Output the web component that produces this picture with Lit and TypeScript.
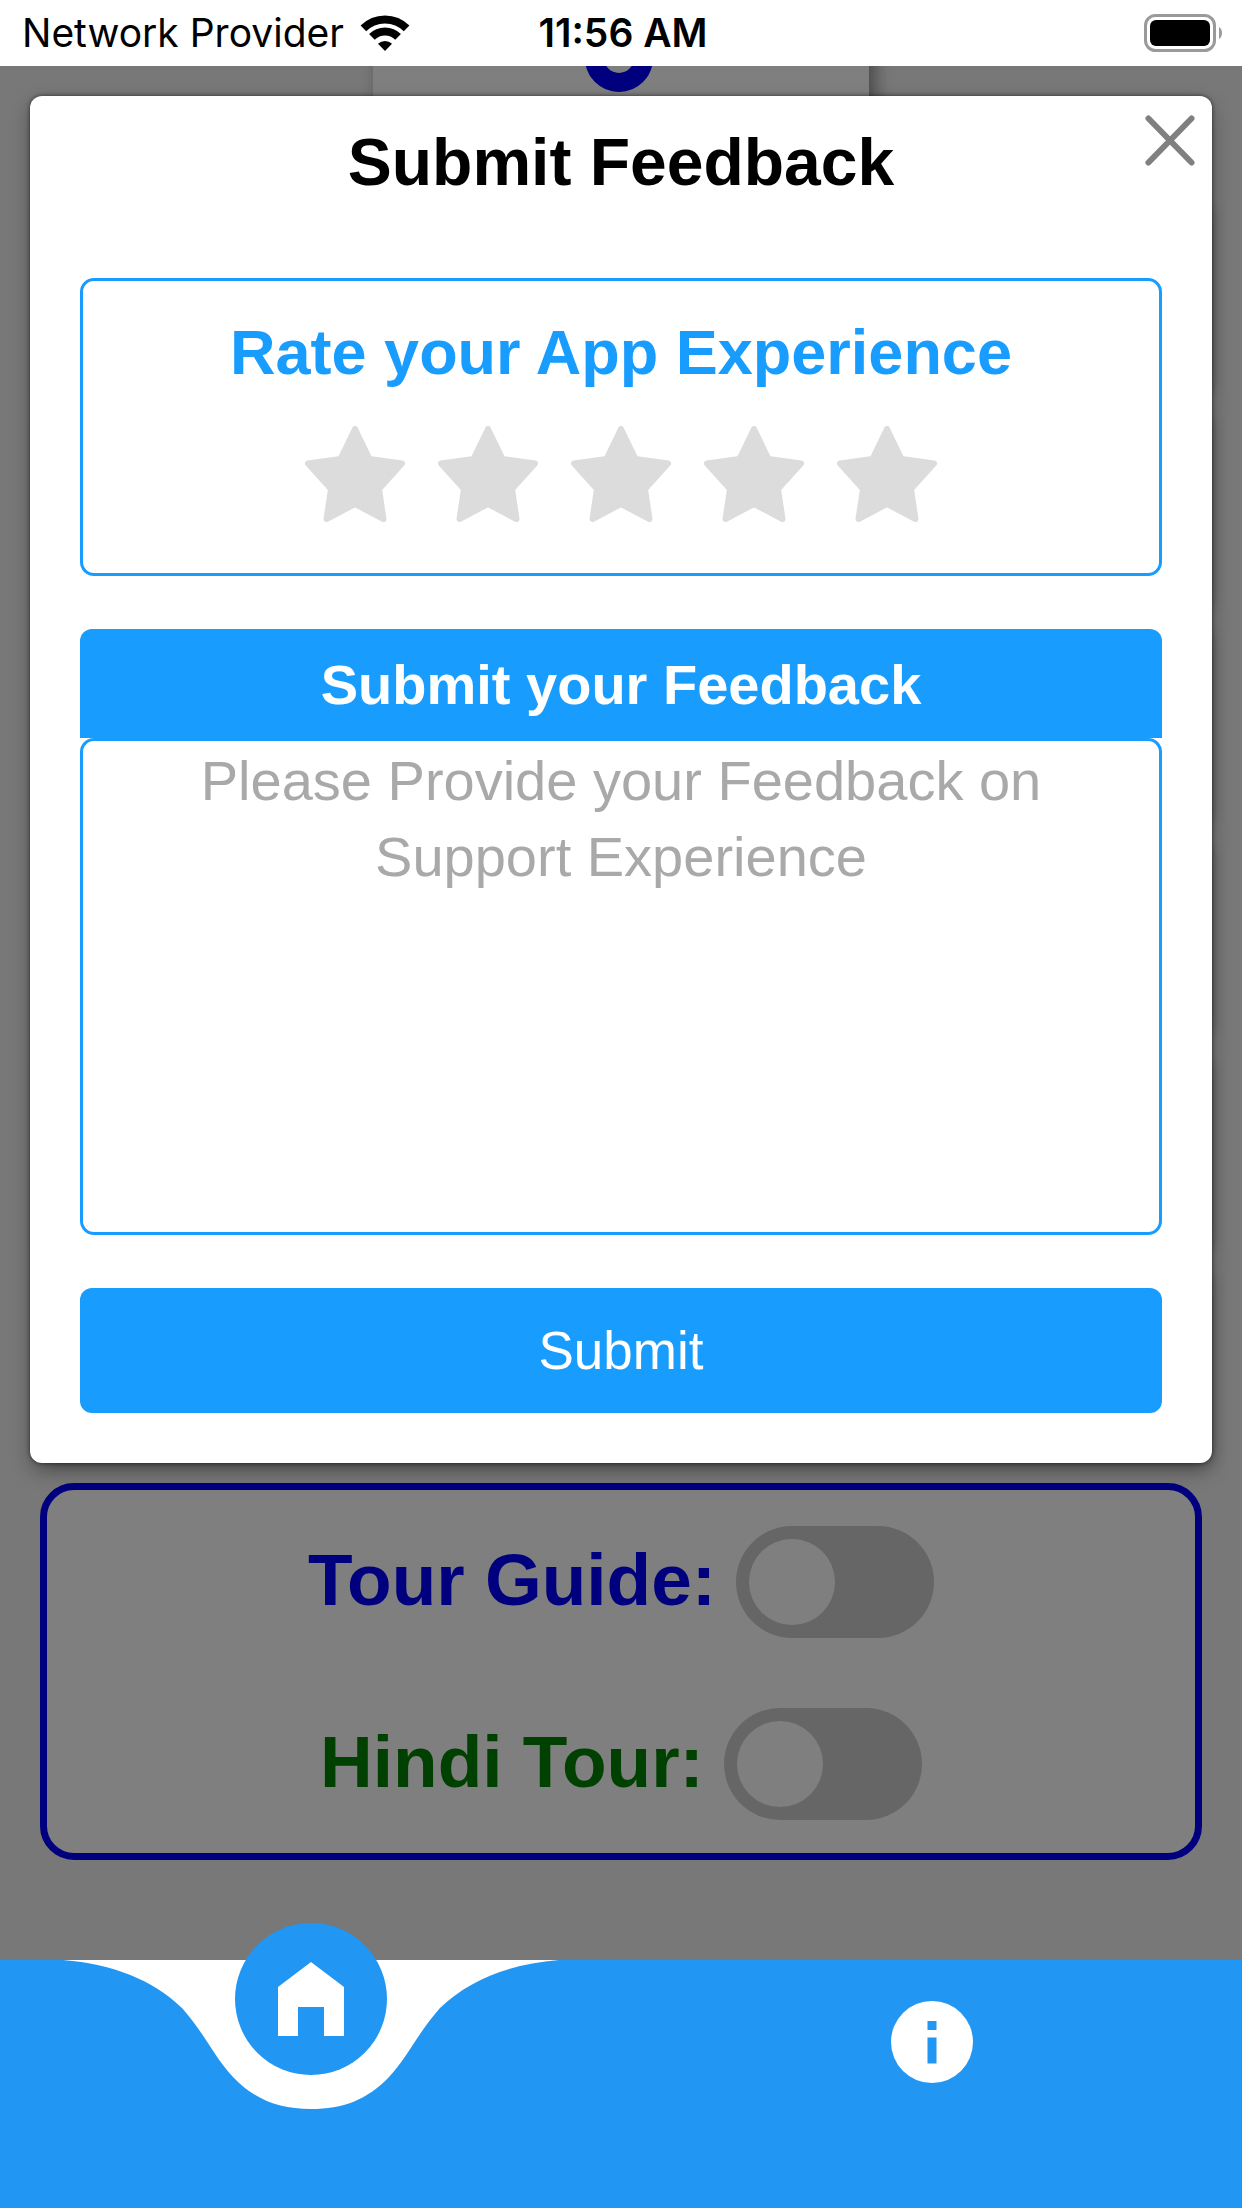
import { LitElement, html, css } from "lit";
import { customElement, state } from "lit/decorators.js";

@customElement("status-bar")
export class StatusBar extends LitElement {
  static styles = css`
    :host {
      display: grid;
      grid-template-columns: 1fr auto 1fr;
      align-items: center;
      height: 66px;
      padding: 0 18px 0 22px;
      background: #fff;
      color: #000;
      font-family: Inter, "Liberation Sans", sans-serif;
      font-size: 39px;
      line-height: 48px;
      white-space: nowrap;
    }
    .carrier {
      display: flex;
      align-items: center;
      gap: 16px;
    }
    .time {
      font-weight: 600;
    }
    .battery {
      justify-self: end;
    }
    svg {
      display: block;
    }
  `;

  render() {
    return html`
      <div class="carrier">
        <span>Network Provider</span>
        <svg width="50" height="36" viewBox="0 0 50 36" role="img" aria-label="Wi-Fi">
          <g fill="none" stroke="#000" stroke-width="8">
            <path d="M3.400 13.400a30.500 30.500 0 0 1 43.200 0" />
            <path d="M11.900 21.900a18.500 18.500 0 0 1 26.200 0" />
          </g>
          <path d="M18 28.800a10 10 0 0 1 14 0L25 36z" />
        </svg>
      </div>
      <span class="time">11:56 AM</span>
      <svg class="battery" width="80" height="38" viewBox="0 0 80 38" role="img" aria-label="Battery full">
        <rect x="1.500" y="1.500" width="69" height="35" rx="10" fill="none" stroke="#9a9a9a" stroke-width="3" />
        <rect x="6" y="6" width="60" height="26" rx="6" />
        <path d="M75 13c4 2 4 10 0 12z" fill="#9a9a9a" />
      </svg>
    `;
  }
}

@customElement("home-screen")
export class HomeScreen extends LitElement {
  static styles = css`
    :host {
      display: block;
      margin-top: -140px;
      background: #f0f0f0;
    }
    .badge,
    .tile {
      background: #fff;
      box-shadow: 6px 6px 16px rgba(0, 0, 0, 0.4);
    }
    .badge {
      display: flex;
      justify-content: center;
      align-items: flex-end;
      width: 40%;
      height: 166px;
      margin: 0 auto;
      padding-bottom: 78px;
    }
    .tiles {
      display: grid;
      grid-auto-rows: 184px;
      gap: 30px;
      margin: 31px 40px 28px;
    }
    .tour {
      display: grid;
      gap: 70px;
      margin: 0 40px 100px;
      padding: 36px 20px 33px;
      border: 7px solid #00f;
      border-radius: 34px;
      background: #fff;
    }
    .row {
      display: flex;
      justify-content: center;
      gap: 20px;
      height: 112px;
      color: #00f;
      font-size: 73px;
      font-weight: 700;
      line-height: 108px;
    }
    .hindi {
      color: #008000;
    }
    .switch {
      appearance: none;
      display: flex;
      width: 198px;
      height: 112px;
      margin: 0;
      padding: 13px;
      box-sizing: border-box;
      border-radius: 56px;
      background: #ccc;
    }
    .switch::before {
      content: "";
      width: 86px;
      height: 86px;
      border-radius: 50%;
      background: #fff;
    }
    .switch:checked {
      justify-content: flex-end;
      background: #2196f3;
    }
  `;

  render() {
    return html`
      <div class="badge">
        <svg width="72" height="68" viewBox="0 0 72 68" aria-hidden="true">
          <circle cx="34" cy="34" r="24.500" fill="none" stroke="#00f" stroke-width="19" />
        </svg>
      </div>
      <div class="tiles">
        ${Array.from({ length: 6 }, () => html`<div class="tile"></div>`)}
      </div>
      <section class="tour">
        <div class="row">
          <label for="guide">Tour Guide:</label>
          <input class="switch" id="guide" type="checkbox" role="switch" />
        </div>
        <div class="row hindi">
          <label for="hindi">Hindi Tour:</label>
          <input class="switch" id="hindi" type="checkbox" role="switch" />
        </div>
      </section>
    `;
  }
}

@customElement("feedback-dialog")
export class FeedbackDialog extends LitElement {
  static styles = css`
    :host {
      display: block;
      background: rgba(0, 0, 0, 0.5);
    }
    .dialog {
      position: relative;
      display: flex;
      flex-direction: column;
      margin: 30px;
      padding: 28px 50px 50px;
      border-radius: 12px;
      background: #fff;
      box-shadow: 0 0 4px rgba(0, 0, 0, 0.6), 0 8px 20px rgba(0, 0, 0, 0.3);
    }
    h1,
    h2 {
      margin: 0;
      text-align: center;
      font-weight: 700;
    }
    h1 {
      color: #000;
      font-size: 66px;
      line-height: 76px;
    }
    h2 {
      color: #189dff;
      font-size: 63px;
      line-height: 72px;
    }
    .close {
      position: absolute;
      top: 16px;
      right: 14px;
      padding: 0;
      border: 0;
      background: none;
    }
    svg {
      display: block;
    }
    .rate {
      margin-top: 78px;
      padding: 35px 20px 51px;
      border: 3px solid #189dff;
      border-radius: 14px;
    }
    .stars {
      display: flex;
      justify-content: center;
      gap: 32px;
      margin-top: 38px;
    }
    .star {
      position: relative;
      color: #dcdcdc;
    }
    .star input {
      position: absolute;
      inset: 0;
      width: 100%;
      height: 100%;
      margin: 0;
      opacity: 0;
    }
    .on {
      color: #ffc107;
    }
    .heading {
      margin-top: 53px;
      padding: 18px 20px 15px;
      border-radius: 12px 12px 0 0;
      background: #189dff;
      color: #fff;
      font-size: 56px;
      font-weight: 700;
      line-height: 76px;
      text-align: center;
    }
    textarea {
      width: 100%;
      height: 497px;
      box-sizing: border-box;
      margin: 0;
      padding: 2px 30px;
      border: 3px solid #189dff;
      border-radius: 14px;
      outline: 0;
      resize: none;
      background: #fff;
      color: #000;
      font-family: inherit;
      font-size: 56px;
      line-height: 76px;
      text-align: center;
    }
    textarea::placeholder {
      color: #a9a9a9;
      opacity: 1;
    }
    .submit {
      margin-top: 53px;
      padding: 26px 20px 25px;
      border: 0;
      border-radius: 12px;
      background: #189dff;
      color: #fff;
      font-family: inherit;
      font-size: 53px;
      line-height: 74px;
    }
  `;

  @state() private rating = 0;

  render() {
    return html`
      <form class="dialog" role="dialog" aria-labelledby="title" @submit=${(e: Event) => e.preventDefault()}>
        <button class="close" type="button" aria-label="Close">
          <svg width="56" height="56" viewBox="0 0 56 56">
            <path d="M6.500 6.500l43 44M49.500 6.500l-43 44" fill="none" stroke="#808080" stroke-width="6" stroke-linecap="round" />
          </svg>
        </button>
        <h1 id="title">Submit Feedback</h1>
        <section class="rate">
          <h2 id="rate-title">Rate your App Experience</h2>
          <div class="stars" role="radiogroup" aria-labelledby="rate-title">
            ${[1, 2, 3, 4, 5].map(
              (n) => html`
                <label class="star ${n <= this.rating ? "on" : ""}">
                  <input
                    type="radio"
                    name="rating"
                    aria-label="${n} of 5"
                    .checked=${n === this.rating}
                    @change=${() => (this.rating = n)}
                  />
                  <svg width="101" height="96" viewBox="0 0 101 96">
                    <path
                      d="M50 3L35.500 33L3 37.500L26 63L21.500 93L50 78L78.500 93L74 63L97 37.500L64.500 33z"
                      fill="currentColor"
                      stroke="currentColor"
                      stroke-width="6"
                      stroke-linejoin="round"
                    />
                  </svg>
                </label>
              `
            )}
          </div>
        </section>
        <label class="heading" for="feedback">Submit your Feedback</label>
        <textarea id="feedback" placeholder="Please Provide your Feedback on Support Experience"></textarea>
        <button class="submit" type="submit">Submit</button>
      </form>
    `;
  }
}

@customElement("tab-bar")
export class TabBar extends LitElement {
  static styles = css`
    :host {
      position: relative;
      z-index: 2;
      display: grid;
      grid-template-columns: 1fr 1fr;
      height: 248px;
      background: #2196f3;
    }
    .tab {
      display: grid;
      justify-items: center;
      align-items: start;
    }
    .tab > * {
      grid-area: 1 / 1;
    }
    svg {
      display: block;
    }
    .home {
      display: grid;
      place-items: center;
      width: 152px;
      height: 152px;
      margin-top: -37px;
      border-radius: 50%;
      background: #2196f3;
    }
    .info {
      margin-top: 41px;
    }
  `;

  render() {
    return html`
      <div class="tab">
        <svg width="496" height="149" viewBox="-248 0 496 149" aria-hidden="true">
          <path
            fill="#fff"
            d="M-248 0C-198 4-158 20-129 48C-106 74-96 98-78 117C-56 140-32 149 0 149C32 149 56 140 78 117C96 98 106 74 129 48C158 20 198 4 248 0z"
          />
        </svg>
        <a class="home" href="#home" aria-label="Home">
          <svg width="68" height="76" viewBox="0 0 68 76">
            <path d="M34 1L67 26V75H47V46H21V75H1V26z" fill="#fff" />
          </svg>
        </a>
      </div>
      <div class="tab">
        <a class="info" href="#info" aria-label="Information">
          <svg width="82" height="82" viewBox="0 0 82 82">
            <circle cx="41" cy="41" r="41" fill="#fff" />
            <path d="M36.500 20h9v9h-9zM36.500 36.500h9v26h-9z" fill="#2196f3" />
          </svg>
        </a>
      </div>
    `;
  }
}

@customElement("app-root")
export class AppRoot extends LitElement {
  static styles = css`
    :host {
      display: flex;
      flex-direction: column;
      min-height: 100vh;
      font-family: "Liberation Sans", Arial, sans-serif;
    }
    .stage {
      flex: 1;
      display: grid;
      grid-template-columns: minmax(0, 1fr);
      overflow: hidden;
    }
    .stage > * {
      grid-area: 1 / 1;
    }
    .over {
      z-index: 1;
    }
  `;

  render() {
    return html`
      <status-bar></status-bar>
      <main class="stage">
        <home-screen></home-screen>
        <feedback-dialog class="over"></feedback-dialog>
      </main>
      <tab-bar></tab-bar>
    `;
  }
}
